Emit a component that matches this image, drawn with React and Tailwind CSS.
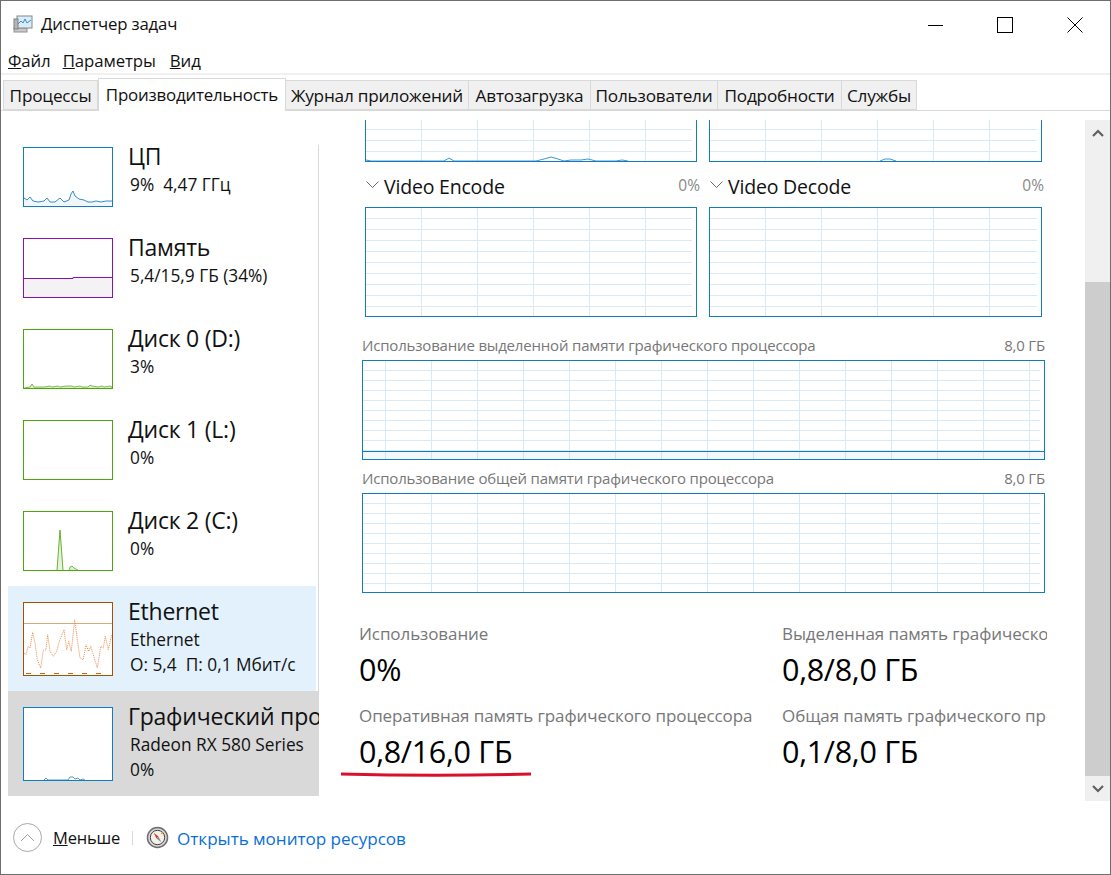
const SIDE_ITEMS = [
  { name: 'ЦП', lines: ['9%  4,47 ГГц'], color: '#117dbb', h: 91, chart: 'cpu' },
  { name: 'Память', lines: ['5,4/15,9 ГБ (34%)'], color: '#8b12ae', h: 91, chart: 'mem' },
  { name: 'Диск 0 (D:)', lines: ['3%'], color: '#4da60c', h: 91, chart: 'disk0' },
  { name: 'Диск 1 (L:)', lines: ['0%'], color: '#4da60c', h: 91, chart: 'none' },
  { name: 'Диск 2 (C:)', lines: ['0%'], color: '#4da60c', h: 91, chart: 'disk2' },
  { name: 'Ethernet', lines: ['Ethernet', 'О: 5,4  П: 0,1 Мбит/с'], color: '#a74f01', h: 105, chart: 'net', bg: 'bg-[#e3f1fc]', w: 'w-[308px]' },
  { name: 'Графический процессор 0', lines: ['Radeon RX 580 Series', '0%'], color: '#117dbb', h: 105, chart: 'gpu', bg: 'bg-[#d9d9d9]', w: 'w-[311px]' },
]

const TABS = ['Процессы', 'Производительность', 'Журнал приложений', 'Автозагрузка', 'Пользователи', 'Подробности', 'Службы']
const TAB_WIDTHS = ['w-[95px]', 'w-[188px]', 'w-[183px]', 'w-[122px]', 'w-[127px]', 'w-[124px]', 'w-[75px]']

const NET = [[72,220],[78,225],[85,200],[90,205],[98,158],[105,190],[112,240],[122,265],[130,212],[138,210],[143,165],[150,215],[160,230],[170,215],[178,185],[192,150],[200,210],[206,185],[214,215],[224,120],[232,180],[240,235],[250,240],[258,195],[266,215],[272,200],[280,225],[292,265],[302,200],[310,205],[316,170],[325,210],[335,165]]
  .map(([x, y]) => `${((x - 72) / 3).toFixed(1)},${((y - 70) / 3).toFixed(1)}`).join(' ')

function Thumb({ item, height }) {
  const inner = height - 2
  return (
    <div className="w-[90px] shrink-0 border bg-white box-border" style={{ height, borderColor: item.color }}>
      <svg width="88" height={inner} className="block">
        {item.chart === 'cpu' && (
          <>
            <polygon fill="#f1f6fa" points="0,50 3,52 6,49 9,53 14,54 20,53 23,50 26,54 31,54 36,50 40,54 45,52 47,46 49,43 51,48 55,51 60,52 64,54 68,54 72,53 77,54 82,53 88,53 88,58 0,58" />
            <polyline fill="none" stroke="#117dbb" strokeOpacity="0.85" points="0,50 3,52 6,49 9,53 14,54 20,53 23,50 26,54 31,54 36,50 40,54 45,52 47,46 49,43 51,48 55,51 60,52 64,54 68,54 72,53 77,54 82,53 88,53" />
          </>
        )}
        {item.chart === 'mem' && (
          <>
            <polygon fill="#f4f2f4" points="0,39 49,39 49,38 88,38 88,58 0,58" />
            <polyline fill="none" stroke="#8b12ae" points="0,39.5 49,39.5 49,38.5 88,38.5" />
          </>
        )}
        {item.chart === 'disk0' && (
          <polyline fill="#dbedce" stroke="#4da60c" strokeOpacity="0.7" points="0,58 6,57 8,54 10,57 16,57 20,57 26,56 28,57 34,56 36,57 42,56 48,56 50,57 56,56 58,57 64,57 66,55 68,56 74,57 78,56 80,57 86,56 88,57 88,58" />
        )}
        {item.chart === 'disk2' && (
          <>
            <polygon fill="#e6f2dc" points="33,58 36,18 39,58" />
            <polyline fill="none" stroke="#4da60c" strokeOpacity="0.85" points="33,58 36,18 39,58" />
            <polyline fill="#dbedce" stroke="#4da60c" strokeOpacity="0.7" points="45,58 46,55 48,54 50,56 52,57 54,58" />
          </>
        )}
        {item.chart === 'net' && (
          <>
            <line x1="0" x2="88" y1="20.5" y2="20.5" stroke="#d9a878" />
            <polyline fill="none" stroke="#ee8a4e" strokeDasharray="1 1" points={NET} />
            <line x1="2" x2="86" y1="70.5" y2="70.5" stroke="#d0651a" strokeDasharray="5 9" />
          </>
        )}
        {item.chart === 'gpu' && (
          <polyline fill="none" stroke="#117dbb" strokeOpacity="0.75" points="20,72 22,70 24,72 44,72 46,69 49,69 51,71 54,70 56,72 59,71 61,72" />
        )}
      </svg>
    </div>
  )
}

function SideItem({ item }) {
  const isTall = item.h === 105
  return (
    <div className={`flex shrink-0 gap-[15px] overflow-hidden pl-[15px] pt-[16px] ${isTall ? 'h-[105px]' : 'h-[91px]'} ${item.bg || ''} ${item.w || 'w-[308px]'}`}>
      <Thumb item={item} height={isTall ? 74 : 60} />
      <div className="min-w-0 flex-1 text-[#111]">
        <div className="-mt-[7px] whitespace-nowrap text-[23px] leading-[32px] tracking-[-0.01em]">{item.name}</div>
        {item.lines.map((line) => (
          <div key={line} className="whitespace-pre pl-[2px] text-[17.3px] leading-[25px]">{line}</div>
        ))}
      </div>
    </div>
  )
}

function Graph({ width, height, stepX, offsetX, stepY, fillFrom, children }) {
  const xs = []
  for (let x = offsetX; x < width - 3; x += stepX) xs.push(x)
  const ys = []
  for (let y = stepY; y < height - 3; y += stepY) ys.push(y)
  return (
    <div className="shrink-0 border border-[#117dbb] bg-white box-border" style={{ width, height }}>
      <svg width={width - 2} height={height - 2} className="block">
        {ys.map((y) => <line key={y} x1="0" x2={width - 6} y1={y - 0.5} y2={y - 0.5} stroke="#d9eaf7" />)}
        {xs.map((x) => <line key={x} x1={x - 0.5} x2={x - 0.5} y1="0" y2={height} stroke="#d9eaf7" />)}
        {fillFrom && (
          <>
            <rect x="0" y={fillFrom} width={width} height={height} fill="#117dbb" fillOpacity="0.06" />
            <line x1="0" x2={width} y1={fillFrom + 0.5} y2={fillFrom + 0.5} stroke="#117dbb" />
          </>
        )}
        {children}
      </svg>
    </div>
  )
}

function EngineHead({ title }) {
  return (
    <div className="flex h-[45px] w-[335px] items-center pt-[5px]">
      <svg width="13" height="8" className="ml-px mr-[5px] -mt-[4px] shrink-0">
        <path d="M0.5 0.5 L6.5 6.5 L12.5 0.5" fill="none" stroke="#666" />
      </svg>
      <span className="text-[19.5px] leading-[24px] tracking-[-0.01em] text-[#111]">{title}</span>
      <span className="ml-auto -mt-[3px] text-[15.5px] text-[#8a8a8a]">0%</span>
    </div>
  )
}

function Stat({ label, value }) {
  return (
    <div>
      <div className="h-[22px] whitespace-nowrap text-[17px] leading-[22px] tracking-[-0.005em] text-[#777]">{label}</div>
      <div className="h-[60px] whitespace-nowrap pt-[3px] text-[30.5px] leading-[42px] tracking-[-0.01em] text-black">{value}</div>
    </div>
  )
}

function TaskIcon() {
  return (
    <svg width="21" height="20" viewBox="0 0 21 20" className="shrink-0">
      <rect x="1" y="14" width="13" height="4" fill="#c9c9c9" stroke="#8f8f8f" />
      <rect x="4" y="2" width="15" height="12" fill="#dcecf7" stroke="#7f8a92" />
      <polyline points="5,10 8,7 10,9 12,5 14,9 18,6" fill="none" stroke="#2f8fd0" />
      <rect x="1" y="5" width="4" height="10" fill="#b5b5b5" stroke="#808080" />
    </svg>
  )
}

function CompassIcon() {
  return (
    <svg width="23" height="23" viewBox="0 0 24 24" className="shrink-0">
      <circle cx="12" cy="12" r="10.5" fill="#d8d6d2" stroke="#6f6f6f" strokeWidth="1.5" />
      <circle cx="12" cy="12" r="7.5" fill="#f3f1ea" stroke="#3a3a3a" />
      <polygon points="8,7 13,11 11,13" fill="#d8321f" />
      <polygon points="16,17 13,11 11,13" fill="#8a8a8a" />
      <line x1="16" y1="8" x2="18" y2="6.5" stroke="#e08a20" strokeWidth="1.2" />
    </svg>
  )
}

export default function App() {
  return (
    <div className="relative flex h-[875px] w-[1111px] flex-col overflow-hidden border border-[#6e6e6e] bg-white font-['Open_Sans','Noto_Sans',sans-serif] text-black box-border">
      {/* Title bar */}
      <div className="flex h-[47px] shrink-0 items-center">
        <div className="ml-[12px] -mt-[1px]"><TaskIcon /></div>
        <span className="ml-[7px] pb-[2px] text-[16.8px] tracking-[-0.01em] text-[#111]">Диспетчер задач</span>
        <div className="ml-auto flex items-center">
          <svg width="16" height="16" className="mr-[54px]"><line x1="1" x2="16" y1="8.5" y2="8.5" stroke="#000" /></svg>
          <svg width="16" height="16" className="mr-[54px]"><rect x="0.5" y="0.5" width="15" height="15" fill="none" stroke="#000" /></svg>
          <svg width="16" height="16" className="mr-[27px]"><path d="M0.5 0.5 L15.5 15.5 M15.5 0.5 L0.5 15.5" stroke="#000" /></svg>
        </div>
      </div>

      {/* Menu */}
      <div className="flex h-[25px] shrink-0 items-center pl-[7px] text-[16.8px] tracking-[-0.005em] text-[#111]">
        <span><u>Ф</u>айл</span>
        <span className="ml-[12px]"><u>П</u>араметры</span>
        <span className="ml-[14px]"><u>В</u>ид</span>
      </div>
      <div className="h-[2px] shrink-0 bg-[#f0f0f0]" />

      {/* Tabs */}
      <div className="flex h-[36px] shrink-0 items-end border-b border-[#d9d9d9] pl-[2px]">
        {TABS.map((tab, i) =>
          i === 1 ? (
            <div key={tab} className={`relative z-10 -mb-px flex h-[33px] items-center justify-center whitespace-nowrap border border-b-0 border-[#d9d9d9] bg-white pb-[1px] text-[16.9px] tracking-[-0.012em] text-[#111] ${TAB_WIDTHS[i]}`}>{tab}</div>
          ) : (
            <div key={tab} className={`flex h-[30px] items-center justify-center whitespace-nowrap border-y border-r border-[#d9d9d9] bg-[#f0f0f0] pt-[1px] text-[17.2px] tracking-[-0.012em] text-[#111] ${i === 0 ? 'border-l' : ''} ${TAB_WIDTHS[i]}`}>{tab}</div>
          )
        )}
      </div>

      {/* Body */}
      <div className="flex h-[694px] shrink-0">
        <div className="relative flex w-[318px] shrink-0 flex-col pl-[7px] pt-[20px]">
          <div className="absolute left-[317px] top-[34px] h-[546px] w-px bg-[#d9d9d9]" />
          {SIDE_ITEMS.map((item) => <SideItem key={item.name} item={item} />)}
        </div>

        <div className="h-[681px] w-[766px] shrink-0 pt-[9px]">
          <div className="h-full w-[728px] overflow-hidden">
            <div className="-mt-[68px]">
              <div className="flex gap-[12px] pl-[46px]">
                <Graph width={332} height={110} stepX={56} offsetX={56} stepY={11}>
                  <polyline fill="none" stroke="#117dbb" strokeOpacity="0.8" points="0,107 5,108 78,108 83,105 88,108 170,108 178,106 185,104 192,106 198,108 205,107 215,107 222,106 230,108 250,108 256,107 262,108" />
                </Graph>
                <Graph width={333} height={110} stepX={56} offsetX={56} stepY={11}>
                  <polyline fill="none" stroke="#117dbb" strokeOpacity="0.8" points="170,108 175,106 180,106 186,108" />
                </Graph>
              </div>
              <div className="flex gap-[9px] pl-[46px]">
                <EngineHead title="Video Encode" />
                <EngineHead title="Video Decode" />
              </div>
              <div className="flex gap-[12px] pl-[46px]">
                <Graph width={332} height={110} stepX={56} offsetX={56} stepY={11} />
                <Graph width={333} height={110} stepX={56} offsetX={56} stepY={11} />
              </div>

              <div className="ml-[43px] flex h-[43px] w-[683px] items-end justify-between pb-[3px] text-[15px] leading-[24px] tracking-[-0.012em] text-[#777]">
                <span>Использование выделенной памяти графического процессора</span>
                <span>8,0 ГБ</span>
              </div>
              <div className="ml-[43px]">
                <Graph width={683} height={100} stepX={46} offsetX={23} stepY={10} fillFrom={90} />
              </div>
              <div className="ml-[43px] flex h-[33px] w-[683px] items-end justify-between pb-[3px] text-[15px] leading-[24px] tracking-[-0.012em] text-[#777]">
                <span>Использование общей памяти графического процессора</span>
                <span>8,0 ГБ</span>
              </div>
              <div className="ml-[43px]">
                <Graph width={683} height={100} stepX={46} offsetX={23} stepY={10} />
              </div>

              <div className="grid grid-cols-[423px_1fr] overflow-hidden pl-[40px] pt-[30px]">
                <Stat label="Использование" value="0%" />
                <Stat label="Выделенная память графического процессора" value="0,8/8,0 ГБ" />
                <Stat label="Оперативная память графического процессора" value="0,8/16,0 ГБ" />
                <Stat label="Общая память графического процессора" value="0,1/8,0 ГБ" />
              </div>
            </div>
          </div>
        </div>

        {/* Scrollbar */}
        <div className="mt-[9px] flex h-[681px] w-[25px] shrink-0 flex-col bg-[#f0f0f0]">
          <div className="flex h-[26px] items-center justify-center">
            <svg width="12" height="8"><path d="M1 7 L6 2 L11 7" fill="none" stroke="#606060" strokeWidth="2.2" /></svg>
          </div>
          <div className="mt-[136px] h-[494px] bg-[#cdcdcd]" />
          <div className="flex h-[25px] items-center justify-center">
            <svg width="12" height="8"><path d="M1 1 L6 6 L11 1" fill="none" stroke="#606060" strokeWidth="2.2" /></svg>
          </div>
        </div>
      </div>

      {/* Footer */}
      <div className="flex flex-1 items-center pb-[4px] pl-[12px]">
        <div className="flex h-[29px] w-[29px] items-center justify-center rounded-full border border-[#a8a8a8]">
          <svg width="15" height="9"><path d="M1 8 L7.5 1.5 L14 8" fill="none" stroke="#a0a0a0" /></svg>
        </div>
        <span className="ml-[11px] pt-[2px] text-[16.5px] tracking-[-0.012em] text-[#111]"><u>М</u>еньше</span>
        <div className="ml-[12px] h-[14px] w-px bg-[#d9d9d9]" />
        <div className="ml-[13px]"><CompassIcon /></div>
        <span className="ml-[8px] pt-[2px] text-[17.1px] tracking-[-0.002em] text-[#0a6fd6]">Открыть монитор ресурсов</span>
      </div>

      {/* Red underline drawn over the screenshot */}
      <svg width="200" height="10" className="absolute left-[339px] top-[768px]">
        <path d="M1 5 C60 6.5 130 6.5 191 5" fill="none" stroke="#d90f2c" strokeWidth="3" />
      </svg>
    </div>
  )
}
